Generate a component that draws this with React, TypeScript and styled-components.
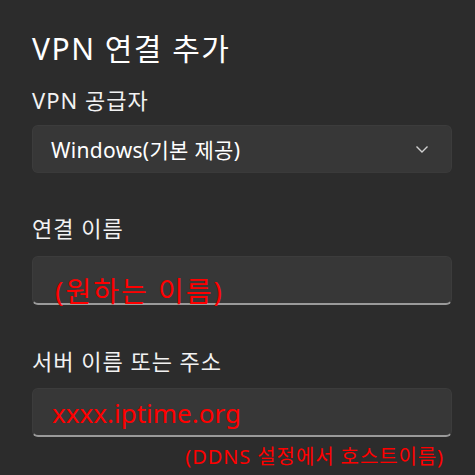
import React from "react";
import styled, { createGlobalStyle } from "styled-components";

const Global = createGlobalStyle`
  html, body { margin: 0; padding: 0; background: #2c2c2c; }
  body { font-family: "Noto Sans", "Noto Sans CJK KR", sans-serif; color: #ffffff; }
`;

const Page = styled.div`
  width: 475px;
  height: 475px;
  box-sizing: border-box;
  padding: 25px 23px 0 32px;
  display: flex;
  flex-direction: column;
  overflow: hidden;
`;

const Title = styled.h1`
  margin: 0;
  font-size: 30px;
  font-weight: 400;
  line-height: 48px;
  letter-spacing: 1.5px;
`;

const Label = styled.div<{ $top: number }>`
  margin-top: ${(p) => p.$top}px;
  font-size: 22px;
  line-height: 30px;
  letter-spacing: 1px;
  color: #f2f2f2;
`;

const Field = styled.div<{ $top: number; $underline?: boolean }>`
  margin-top: ${(p) => p.$top}px;
  height: ${(p) => (p.$underline ? 49 : 48)}px;
  box-sizing: border-box;
  background: #373737;
  border-radius: 6px;
  border: 1px solid #3c3c3c;
  border-bottom: ${(p) => (p.$underline ? "2px solid #9a9a9a" : "1px solid #3a3a3a")};
  display: flex;
  align-items: center;
`;

const SelectText = styled.span`
  padding-left: 18px;
  font-size: 21px;
  letter-spacing: 0.3px;
  flex: 1;
  color: #ffffff;
`;

const Chevron = styled.svg`
  width: 14px;
  height: 14px;
  margin-right: 22px;
`;

const RedText = styled.span<{ $pad: number; $size: number; $shift: number; $spacing: number }>`
  padding-left: ${(p) => p.$pad}px;
  font-size: ${(p) => p.$size}px;
  letter-spacing: ${(p) => p.$spacing}px;
  color: #ff0000;
  white-space: nowrap;
  transform: translateY(${(p) => p.$shift}px);
`;

const Note = styled.div`
  align-self: flex-end;
  margin-right: 8px;
  margin-top: 7px;
  font-size: 20px;
  line-height: 26px;
  letter-spacing: 0.9px;
  color: #ff0000;
  white-space: nowrap;
`;

export default function App() {
  return (
    <>
      <Global />
      <Page>
        <Title>VPN 연결 추가</Title>
        <Label $top={12}>VPN 공급자</Label>
        <Field $top={10}>
          <SelectText>Windows(기본 제공)</SelectText>
          <Chevron viewBox="0 0 14 14">
            <path d="M1.5 4.5 L7 10 L12.5 4.5" fill="none" stroke="#d0d0d0" strokeWidth="1.4" />
          </Chevron>
        </Field>
        <Label $top={40}>연결 이름</Label>
        <Field $top={13} $underline>
          <RedText $pad={22} $size={28} $shift={10} $spacing={2}>(원하는 이름)</RedText>
        </Field>
        <Label $top={41}>서버 이름 또는 주소</Label>
        <Field $top={12} $underline>
          <RedText $pad={19} $size={26} $shift={1} $spacing={0}>xxxx.iptime.org</RedText>
        </Field>
        <Note>(DDNS 설정에서 호스트이름)</Note>
      </Page>
    </>
  );
}
